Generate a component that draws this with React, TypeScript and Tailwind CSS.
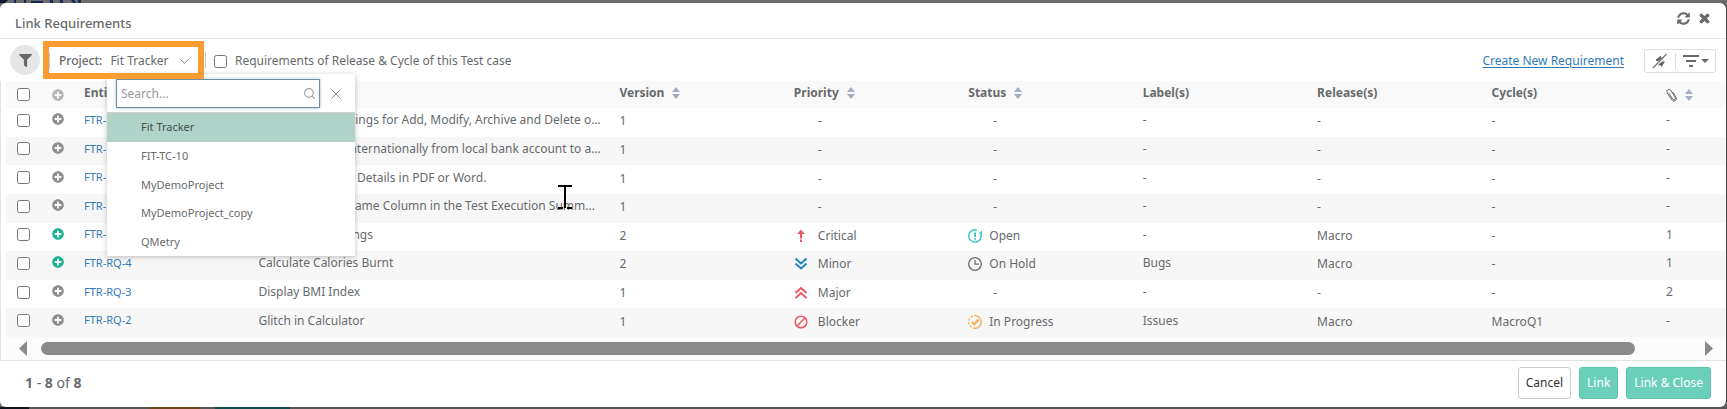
import { useState } from 'react';
import { FaFilter, FaPlusCircle, FaSyncAlt, FaTimes } from 'react-icons/fa';
import { ChevronDown, Search, X } from 'lucide-react';

type Priority = 'Critical' | 'Minor' | 'Major' | 'Blocker';
type Status = 'Open' | 'On Hold' | 'In Progress';

interface Requirement {
  id: string;
  name: string;
  version: number;
  linked?: boolean;
  priority?: Priority;
  status?: Status;
  labels?: string;
  release?: string;
  cycle?: string;
  attachments?: number;
}

const projects = ['Fit Tracker', 'FIT-TC-10', 'MyDemoProject', 'MyDemoProject_copy', 'QMetry'];

const requirements: Requirement[] = [
  { id: 'FTR-RQ-9', name: 'Provide User Settings for Add, Modify, Archive and Delete o...', version: 1 },
  { id: 'FTR-RQ-8', name: 'Transfer Funds Internationally from local bank account to a...', version: 1 },
  { id: 'FTR-RQ-7', name: 'Export Customer Details in PDF or Word.', version: 1 },
  { id: 'FTR-RQ-6', name: 'Include Project Name Column in the Test Execution Summ...', version: 1 },
  { id: 'FTR-RQ-5', name: 'My Account Settings', version: 2, linked: true, priority: 'Critical', status: 'Open', release: 'Macro', attachments: 1 },
  { id: 'FTR-RQ-4', name: 'Calculate Calories Burnt', version: 2, linked: true, priority: 'Minor', status: 'On Hold', labels: 'Bugs', release: 'Macro', attachments: 1 },
  { id: 'FTR-RQ-3', name: 'Display BMI Index', version: 1, priority: 'Major', attachments: 2 },
  { id: 'FTR-RQ-2', name: 'Glitch in Calculator', version: 1, priority: 'Blocker', status: 'In Progress', labels: 'Issues', release: 'Macro', cycle: 'MacroQ1' },
];

function SortIcon() {
  return (
    <svg width="8" height="12" viewBox="0 0 8 12" fill="#a3afc4" aria-hidden="true">
      <path d="M4 0 8 5H0z M0 7h8L4 12z" />
    </svg>
  );
}

function ClipIcon() {
  return (
    <svg width="12" height="14" viewBox="0 0 12 14" fill="none" stroke="#666" strokeLinecap="round" aria-hidden="true">
      <path d="M3 5.5 6.8 11.3a1.6 1.6 0 0 0 2.7-1.7L4.9 2.4a2.2 2.2 0 0 0-3.7 2.4l4.6 7.1c1.8 2.6 5.8.4 4.2-2.6L7 4.5" />
    </svg>
  );
}

function PriorityIcon({ priority }: { priority: Priority }) {
  const red = '#ed5565';
  return (
    <svg width="14" height="14" viewBox="0 0 14 14" fill="none" strokeWidth="2" aria-hidden="true">
      {priority === 'Critical' && (
        <>
          <path d="M7 .5 10.8 5H3.2z" fill={red} />
          <path d="M7 3v6.5M7 10.5V13" stroke={red} />
        </>
      )}
      {priority === 'Minor' && <path d="m1.5 1.5 5.5 5 5.5-5M1.5 6.5l5.5 5 5.5-5" stroke="#1c84c6" />}
      {priority === 'Major' && <path d="m1.5 7 5.500-5 5.500 5M1.500 12 7 7l5.500 5" stroke={red} />}
      {priority === 'Blocker' && (
        <>
          <circle cx="7" cy="7" r="5.800" stroke={red} strokeWidth="1.500" />
          <path d="m3.200 10.800 7.600-7.600" stroke={red} strokeWidth="1.500" />
        </>
      )}
    </svg>
  );
}

function StatusIcon({ status }: { status: Status }) {
  return (
    <svg width="14" height="14" viewBox="0 0 14 14" fill="none" strokeWidth="1.300" aria-hidden="true">
      {status === 'Open' && (
        <g stroke="#23c6c8">
          <path d="M9 1.100A6.200 6.200 0 1 0 13.100 6V3.800" />
          <path d="M10.800 4.200h2.600V2" />
          <path d="M7 3.500v4.500M7 9.200v1.600" strokeWidth="1.800" />
        </g>
      )}
      {status === 'On Hold' && (
        <g stroke="#676a6c">
          <circle cx="7" cy="7" r="6.300" />
          <path d="M7 3v4.200h4" />
        </g>
      )}
      {status === 'In Progress' && (
        <g stroke="#f8ac59">
          <path d="M7 .7a6.300 6.300 0 0 1 0 12.600" />
          <path d="M7 13.300A6.300 6.300 0 0 1 7 .7" strokeDasharray="2.200 1.500" />
          <path d="m3.800 7 2.400 2.400 4.400-4.800" strokeWidth="2.200" />
        </g>
      )}
    </svg>
  );
}

function ProjectMenu({ selected, onSelect }: { selected: string; onSelect: (project: string) => void }) {
  return (
    <div className="absolute left-[107px] top-[71px] z-10 w-62 bg-white shadow-[0_1px_5px_rgba(0,0,0,0.25)]">
      <div className="flex items-center gap-2 border-b border-[#cfcfcf] pb-1 pl-[9px] pt-[5px]">
        <label className="flex h-[29px] w-51 items-center border border-[#6c8fa1] pl-1 pr-[3px] shadow-[0_0_3px_rgba(108,143,161,0.6)]">
          <input
            type="text"
            aria-label="Search projects"
            placeholder="Search..."
            className="w-full min-w-0 outline-none placeholder:text-[#999]"
          />
          <Search size={13} className="shrink-0 text-[#999]" />
        </label>
        <button aria-label="Clear search" className="text-[#888]">
          <X size={16} strokeWidth={1.5} />
        </button>
      </div>
      <ul role="listbox" aria-label="Projects" className="flex h-[143px] flex-col text-[11px]">
        {projects.map((project) => (
          <li
            key={project}
            role="option"
            aria-selected={project === selected}
            onClick={() => onSelect(project)}
            className={`flex flex-1 cursor-pointer items-center pl-[34px] pt-px ${
              project === selected ? 'bg-[#b0d3c9] text-[#41524d]' : 'hover:bg-gray-100'
            }`}
          >
            {project}
          </li>
        ))}
      </ul>
    </div>
  );
}

export default function App() {
  const [project, setProject] = useState('Fit Tracker');

  return (
    <div className="bg-[#6b6b6b] font-['Noto_Sans','Open_Sans',sans-serif] text-xs text-[#676a6c]">
      {/* page behind the dialog */}
      <svg className="block" width="100" height="3" aria-hidden="true">
        <path d="M0 0h8L5 3H0z" fill="#10182f" />
        <path d="M14 0h2v3h-2zM24 0h2v3h-2zM31 1h12v2H31zM50 0h3v3h-3zM60 0h3v3h-3zM71 0h3l2 3h-3zM78 0h3v3h-3z" fill="#14285c" />
      </svg>

      <div role="dialog" aria-labelledby="dialog-title" className="relative mr-px rounded-md bg-white shadow-[1px_0_0_#444]">
        <header className="flex h-9 items-center justify-between border-b border-[#e5e5e5] pl-[15px] pr-[15px]">
          <h1 id="dialog-title" className="pt-1.5 text-[13px] font-medium">
            Link Requirements
          </h1>
          <div className="flex items-center gap-2 pb-1">
            <button aria-label="Refresh">
              <FaSyncAlt size={13} />
            </button>
            <button aria-label="Close">
              <FaTimes size={13} strokeWidth={40} stroke="currentColor" />
            </button>
          </div>
        </header>

        <div className="flex h-[42px] items-center justify-between pl-[10px] pr-[10px]">
          <div className="flex items-center">
            <button aria-label="Filter" className="flex size-[30px] items-center justify-center rounded-full bg-[#e6e6e6]">
              <FaFilter size={13} />
            </button>
            <div className="relative z-20 ml-[3px] h-[38px] w-[161px] border-6 border-[#f99d33]">
              <button aria-haspopup="listbox" aria-expanded="true" className="flex h-full w-full items-center whitespace-nowrap pt-0.5">
                <span className="h-4 w-px bg-[#ccc]" />
                <span className="ml-[9px] font-medium">Project:</span>
                <span className="ml-2">{project}</span>
                <ChevronDown size={15} strokeWidth={1.5} className="ml-auto mr-1.5" />
              </button>
            </div>
            <span className="ml-px h-4 w-px bg-[#ccc]" />
            <label className="ml-2 flex items-center gap-2 pt-0.5">
              <input type="checkbox" className="size-[13px]" />
              Requirements of Release &amp; Cycle of this Test case
            </label>
          </div>

          <div className="flex items-center gap-5 pt-0.5">
            <a href="#create" className="text-[#337ab7] underline underline-offset-2">
              Create New Requirement
            </a>
            <div className="flex h-6 items-center rounded-[3px] border border-[#ddd]">
              <button aria-label="Clear sorting" className="px-[7px]">
                <svg width="16" height="16" viewBox="0 0 16 16" aria-hidden="true">
                  <path d="M4 6.500 9 2.500v2h2L6.500 8H4zM5.500 12.500 10 8.500h3L9.500 14l-1.500-2z" fill="#666" />
                  <path d="M1 15 14.500 1" stroke="#777" strokeWidth="1.300" />
                </svg>
              </button>
              <span className="h-4 w-px bg-[#ddd]" />
              <button aria-label="Sort options" className="px-1.5">
                <svg width="27" height="12" viewBox="0 0 27 12" fill="#676a6c" aria-hidden="true">
                  <path d="M1 0h16v2H1zM4 5h10v2H4zM7 10h4v2H7zM19 4h8l-4 4z" />
                </svg>
              </button>
            </div>
          </div>
        </div>

        <ProjectMenu selected={project} onSelect={setProject} />

        <div className="border-b border-l border-[#e2e2e2] pl-[5px]">
          <table className="h-64 w-full table-fixed text-left">
            <colgroup>
              <col className="w-9" />
              <col className="w-9" />
              <col />
              <col className="w-[361px]" />
              <col span={6} />
              <col className="w-[66px]" />
            </colgroup>
            <thead className="bg-[#f9f9f9]">
              <tr className="h-[27px]">
                <th className="pl-[11px]">
                  <input type="checkbox" aria-label="Select all" className="block size-[13px]" />
                </th>
                <th className="pl-[10px]">
                  <FaPlusCircle size={12} className="text-[#b5b5b5]" />
                </th>
                <th className="pb-1 pl-1.5">Entity Key</th>
                <th className="pb-1 pl-1.5">Name</th>
                <th className="pb-1 pl-1.5">
                  <span className="flex items-center gap-2">Version <SortIcon /></span>
                </th>
                <th className="pb-1 pl-1.5">
                  <span className="flex items-center gap-2">Priority <SortIcon /></span>
                </th>
                <th className="pb-1 pl-1.5">
                  <span className="flex items-center gap-2">Status <SortIcon /></span>
                </th>
                <th className="pb-1 pl-1.5">Label(s)</th>
                <th className="pb-1 pl-1.5">Release(s)</th>
                <th className="pb-1 pl-1.5">Cycle(s)</th>
                <th aria-label="Attachments" className="pl-1.5">
                  <span className="flex items-center gap-[7px]"><ClipIcon /> <SortIcon /></span>
                </th>
              </tr>
            </thead>
            <tbody>
              {requirements.map((req) => (
                <tr key={req.id} className="even:bg-[#f7f7f7]">
                  <td className="pb-1 pl-[11px]">
                    <input type="checkbox" aria-label={`Select ${req.id}`} className="block size-[13px]" />
                  </td>
                  <td className="pb-1.5 pl-[10px]">
                    <FaPlusCircle size={12} className={req.linked ? 'text-[#1ab394]' : 'text-[#8f8f8f]'} />
                  </td>
                  <td className="pb-1 pl-1.5 text-[11px]">
                    <a href={`#${req.id}`} className="text-[#337ab7]">{req.id}</a>
                  </td>
                  <td className="whitespace-nowrap pb-1 pl-1.5">{req.name}</td>
                  <td className="pb-0.5 pl-1.5">{req.version}</td>
                  <td className="pb-0.5 pl-1.5">
                    <span className="flex items-center gap-[10px]">
                      {req.priority ? <PriorityIcon priority={req.priority} /> : <span className="w-[14px]" />}
                      {req.priority ?? '-'}
                    </span>
                  </td>
                  <td className="pb-0.5 pl-1.5">
                    <span className="flex items-center gap-[7px]">
                      {req.status ? <StatusIcon status={req.status} /> : <span className="w-[18px]" />}
                      {req.status ?? '-'}
                    </span>
                  </td>
                  <td className="pb-1 pl-1.5">{req.labels ?? '-'}</td>
                  <td className="pb-0.5 pl-1.5">{req.release ?? '-'}</td>
                  <td className="pb-0.5 pl-1.5">{req.cycle ?? '-'}</td>
                  <td className="pb-1 pl-1.5">{req.attachments ?? '-'}</td>
                </tr>
              ))}
            </tbody>
          </table>

          <div className="flex h-[23px] items-center bg-[#fcfcfc] pl-[13px] pr-[13px]">
            <svg width="8" height="15" viewBox="0 0 8 15" fill="#8a8a8a" aria-hidden="true">
              <path d="M8 0v15L0 7.500z" />
            </svg>
            <div className="ml-[14px] mr-[70px] h-[13px] flex-1 rounded-full bg-[#8a8a8a]" />
            <svg width="8" height="15" viewBox="0 0 8 15" fill="#8a8a8a" aria-hidden="true">
              <path d="M0 0v15l8-7.500z" />
            </svg>
          </div>
        </div>

        <footer className="flex h-[46px] items-center justify-between pb-0.5 pl-[25px] pr-[15px]">
          <p className="text-sm">
            <b>1</b> - <b>8</b> of <b>8</b>
          </p>
          <div className="flex gap-2">
            <button className="h-8 rounded-[3px] border border-[#ccc] px-[7px] text-[#333]">Cancel</button>
            <button className="h-8 rounded-[3px] border border-[#5fc4ae] bg-[#6bcfba] px-[7px] text-white">Link</button>
            <button className="h-8 rounded-[3px] border border-[#5fc4ae] bg-[#6bcfba] px-[7px] text-white">Link &amp; Close</button>
          </div>
        </footer>

        {/* text cursor */}
        <svg className="absolute left-[558px] top-[182px]" width="14" height="24" viewBox="0 0 14 24" fill="none" stroke="#000" strokeWidth="2" aria-hidden="true">
          <path d="M0 1h14M7 1v22M0 23h5M9 23h5" />
        </svg>
      </div>

      <div className="flex h-0.5 bg-[#555]">
        <span className="w-[29px] bg-[#0e141c]" />
        <span className="ml-30 w-[51px] bg-[#6b451c]" />
        <span className="ml-[15px] w-[75px] bg-[#0d4a48]" />
      </div>
    </div>
  );
}
